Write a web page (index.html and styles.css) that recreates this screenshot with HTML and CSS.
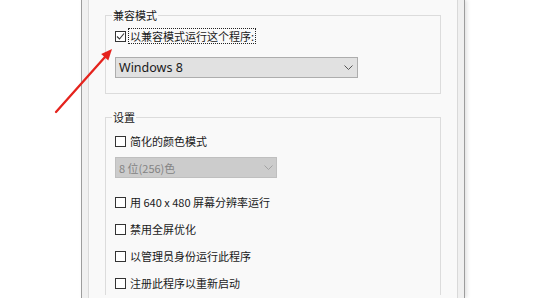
FILE: index.html
```html
<!DOCTYPE html>
<html lang="zh-CN">
<head>
<meta charset="utf-8">
<title>兼容性</title>
<link rel="stylesheet" href="styles.css">
</head>
<body>
<div class="window">
  <div class="tabpage">
    <fieldset class="group group-compat">
      <legend>兼容模式</legend>
      <div class="check-row">
        <span class="box"><svg width="9" height="9" viewBox="0 0 9 9"><path d="M1 4.5 L3.5 7 L8 1.5" fill="none" stroke="#333" stroke-width="1.1"/></svg></span>
        <span class="label focus">以兼容模式运行这个程序:</span>
      </div>
      <div class="combo combo-os">
        <span>Windows 8</span>
        <svg width="9" height="5" viewBox="0 0 9 5"><path d="M0.5 0.5 L4.5 4.5 L8.5 0.5" fill="none" stroke="#555" stroke-width="1"/></svg>
      </div>
    </fieldset>

    <fieldset class="group group-settings">
      <legend>设置</legend>
      <div class="check-row">
        <span class="box"></span>
        <span class="label">简化的颜色模式</span>
      </div>
      <div class="combo combo-color disabled">
        <span>8 位(256)色</span>
        <svg width="9" height="5" viewBox="0 0 9 5"><path d="M0.5 0.5 L4.5 4.5 L8.5 0.5" fill="none" stroke="#a3a3a3" stroke-width="1"/></svg>
      </div>
      <div class="check-row row-res">
        <span class="box"></span>
        <span class="label">用 640 x 480 屏幕分辨率运行</span>
      </div>
      <div class="check-row row-next">
        <span class="box"></span>
        <span class="label">禁用全屏优化</span>
      </div>
      <div class="check-row row-next">
        <span class="box"></span>
        <span class="label">以管理员身份运行此程序</span>
      </div>
      <div class="check-row row-next">
        <span class="box"></span>
        <span class="label">注册此程序以重新启动</span>
      </div>
    </fieldset>
  </div>
</div>
<svg class="arrow" width="546" height="298" viewBox="0 0 546 298">
  <line x1="56" y1="112" x2="105" y2="57" stroke="#e5231d" stroke-width="2.3" stroke-linecap="round"/>
  <polygon points="112,49 108.3,60.4 101.2,54" fill="#e5231d"/>
</svg>
</body>
</html>
```

FILE: styles.css
```css
html, body {
  margin: 0;
  padding: 0;
}

body {
  width: 546px;
  height: 298px;
  overflow: hidden;
  position: relative;
  background: #ffffff;
  font-family: "Noto Sans CJK SC", "Noto Sans", sans-serif;
  font-size: 11px;
  line-height: 14px;
  color: #1a1a1a;
}

.window {
  margin-left: 81px;
  width: 384px;
  height: 298px;
  box-sizing: border-box;
  display: flex;
  padding: 0 6px;
  background: #f0f0f0;
  border-left: 1px solid #9c9c9c;
  border-right: 1px solid #9c9c9c;
  box-shadow: 2px 0 4px rgba(0, 0, 0, 0.12);
  overflow: hidden;
}

.tabpage {
  width: 370px;
  box-sizing: border-box;
  padding: 8px 16px 0;
  background: #f9f9f9;
  border-left: 1px solid #d9d9d9;
  border-right: 1px solid #d9d9d9;
}

.group {
  margin: 0;
  padding: 0 0 15px 9px;
  border: 1px solid #dcdcdc;
  min-width: 0;
}

.group legend {
  padding: 0 1px;
  margin-left: -3px;
  line-height: 14px;
  color: #1a1a1a;
}

.group-settings {
  margin-top: 16px;
  padding-bottom: 4px;
  border-bottom: none;
}

.check-row {
  display: flex;
  align-items: center;
  height: 16px;
  margin-top: 6px;
}

.group-settings .check-row {
  margin-top: 9px;
}

.group-settings .row-res {
  margin-top: 16px;
}

.group-settings .row-next {
  margin-top: 11px;
}

.box {
  width: 11px;
  height: 11px;
  box-sizing: border-box;
  border: 1px solid #333333;
  background: #ffffff;
  display: flex;
  align-items: center;
  justify-content: center;
  flex: none;
}

.label {
  margin-left: 2px;
  padding: 0 1px;
  line-height: 14px;
  border: 1px dotted transparent;
  white-space: nowrap;
}

.label.focus {
  border-color: #222222;
}

.combo {
  display: flex;
  align-items: center;
  justify-content: space-between;
  height: 21px;
  box-sizing: border-box;
  margin-top: 13px;
  padding: 0 4px 0 3px;
  border: 1px solid #adadad;
  background: #e1e1e1;
  font-family: "Noto Sans", "Noto Sans CJK SC", sans-serif;
  font-size: 12.5px;
  color: #1a1a1a;
}

.combo-os {
  width: 243px;
}

.combo-color {
  width: 162px;
  margin-top: 8px;
}

.combo.disabled {
  background: #cccccc;
  border-color: #bfbfbf;
  color: #838383;
  font-family: "Noto Sans CJK SC", "Noto Sans", sans-serif;
  font-size: 11px;
  padding-right: 3px;
}

.arrow {
  position: absolute;
  left: 0;
  top: 0;
  pointer-events: none;
}
```
